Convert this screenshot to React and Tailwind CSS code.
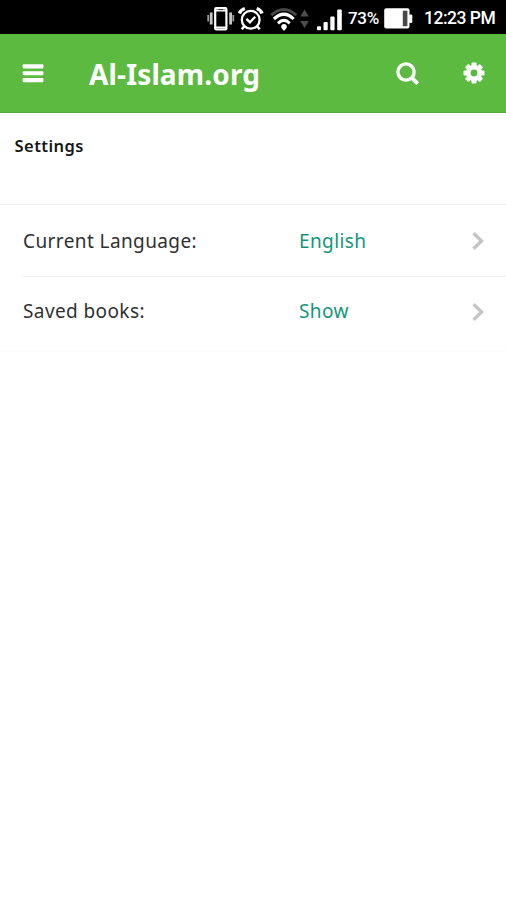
import React from 'react'

const VibrateIcon = () => (
  <svg width="28" height="26" viewBox="0 0 28 26" fill="none" stroke="#fff">
    <path d="M1.200 10v6.500M26.300 10v6.500" strokeWidth="1.800" stroke="#999" />
    <path d="M4.200 7.500v12M23.600 7.500v12" strokeWidth="2.800" stroke="#c4c4c4" />
    <rect x="8.200" y="3.200" width="11.200" height="21.300" rx="1" strokeWidth="2.200" />
    <path d="M8.500 5.500h10.700M8.500 22.600h10.700" strokeWidth="2" />
    <path d="M11.500 4.600h4.500" strokeWidth="1" stroke="#333" />
  </svg>
)

const AlarmIcon = () => (
  <svg width="26" height="26" viewBox="0 0 26 26" fill="none" stroke="#fff">
    <circle cx="12.700" cy="14.800" r="8.900" strokeWidth="2.300" />
    <path d="M1.400 8.500Q2.500 5 6.800 3.500M24 8.500Q23 5 18.700 3.500" strokeWidth="3.400" />
    <path d="M6.500 21l-2.700 3.300M19 21l2.700 3.300" strokeWidth="2.600" />
    <path d="M8.500 13.800l3.400 3.500 5.300-5.600" strokeWidth="2.400" />
  </svg>
)

const WifiIcon = () => (
  <svg width="28" height="26" viewBox="0 0 28 26" fill="none">
    <path d="M1.300 10.200Q14 -1.200 26.300 10.200" stroke="#484848" strokeWidth="2.900" />
    <path d="M3.900 14Q14 4.500 23.700 14" stroke="#fff" strokeWidth="3.100" />
    <path d="M8 18.300Q14 12.600 19.700 18.300" stroke="#fff" strokeWidth="3.100" />
    <path d="M14 18.900a2.900 2.900 0 0 1 2.700 3.800L14 25.900l-2.700-3.200A2.900 2.900 0 0 1 14 18.900z" fill="#fff" />
  </svg>
)

const DataArrowsIcon = () => (
  <svg width="9" height="26" viewBox="0 0 9 26" fill="#4d4d4d">
    <path d="M4.500 4.500l4.300 7H.2zM4.500 23l4.300-7H.2z" />
  </svg>
)

const SignalIcon = () => (
  <svg width="26" height="26" viewBox="0 0 26 26" fill="#fff">
    <rect x="0" y="21.300" width="4" height="4" rx="1" />
    <rect x="6.500" y="17" width="4.200" height="8.300" rx="1" />
    <rect x="13.300" y="11.500" width="4.300" height="13.800" rx="1" />
    <rect x="20.200" y="4.500" width="4.600" height="20.800" rx="1" />
  </svg>
)

const BatteryIcon = () => (
  <svg width="29" height="26" viewBox="0 0 29 26">
    <rect x="0.200" y="3.200" width="25.300" height="20.200" rx="2" fill="#fff" />
    <rect x="25" y="9.500" width="3.300" height="8.500" rx="1.200" fill="#fff" />
    <rect x="18.800" y="5.700" width="4.600" height="15.500" fill="#484848" />
  </svg>
)

const MenuIcon = () => (
  <svg width="22" height="20" viewBox="0 0 22 20" fill="#fff">
    <rect x="0.700" y="1.300" width="20.700" height="4.100" rx="1" />
    <rect x="0.700" y="8.300" width="20.700" height="3.900" rx="1" />
    <rect x="0.700" y="15.100" width="20.700" height="4.100" rx="1" />
  </svg>
)

const SearchIcon = () => (
  <svg width="24" height="24" viewBox="0 0 24 24" fill="none" stroke="#fff">
    <circle cx="10" cy="10" r="8.100" strokeWidth="3.400" />
    <path d="M15.700 15.700l6 6" strokeWidth="4" />
  </svg>
)

// eight rounded teeth around a ring
const GearIcon = () => (
  <svg width="22" height="22" viewBox="-11 -11 22 22" fill="#fff">
    {[0, 45, 90, 135].map((angle) => (
      <rect key={angle} x="-2.500" y="-10.500" width="5" height="21" rx="1" transform={`rotate(${angle})`} />
    ))}
    <circle r="8" />
    <circle r="3.400" fill="#5dba40" />
  </svg>
)

const ChevronIcon = () => (
  <svg width="14" height="20" viewBox="0 0 14 20" fill="none" stroke="#c5c5c5" strokeWidth="3.300">
    <path d="M2.500 2.200L10.600 10l-8.100 7.800" />
  </svg>
)

const settings = [
  { label: 'Current Language:', value: 'English' },
  { label: 'Saved books:', value: 'Show' },
]

const StatusBar = () => (
  <div className="flex h-[34px] items-center bg-black pl-[207px] pt-[2px] font-['Roboto',sans-serif] font-medium text-white">
    <VibrateIcon />
    <div className="ml-[3px]"><AlarmIcon /></div>
    <div className="ml-[6px]"><WifiIcon /></div>
    <div className="ml-[2px]"><DataArrowsIcon /></div>
    <div className="ml-[8px]"><SignalIcon /></div>
    <span className="ml-[5px] w-[36px] whitespace-nowrap pt-px text-[17px] tracking-[-0.300px]">73%</span>
    <BatteryIcon />
    <span className="ml-[11px] whitespace-nowrap pt-px text-[17.500px] tracking-[-0.500px]">12:23 PM</span>
  </div>
)

const Header = () => (
  <header className="flex h-[79px] items-center border-b border-[#55a63b] bg-[#5dba40] pl-[22px] pr-[21px]">
    <button aria-label="Menu"><MenuIcon /></button>
    <h1 className="ml-[45px] flex-1 pt-px text-[28px] font-bold tracking-[0.150px] text-white">Al-Islam.org</h1>
    <button className="pt-px" aria-label="Search"><SearchIcon /></button>
    <button className="ml-[43px]" aria-label="Settings"><GearIcon /></button>
  </header>
)

const App = () => {
  return (
    <div className="h-[900px] overflow-hidden bg-white font-['Noto_Sans',sans-serif]">
      <StatusBar />
      <Header />
      <h2 className="h-[91px] pl-[14.500px] pt-[21px] text-[16.500px] font-semibold tracking-[0.450px] text-[#151515]">Settings</h2>

      <ul className="border-y border-[#f0f0f0] border-b-[#fafafa] pl-[22px] text-[19px] tracking-[0.400px] text-[#303030]">
        {settings.map((item) => (
          <li
            key={item.label}
            className="flex h-[72px] items-center border-b border-[#f2f2f2] pt-px last:h-[74px] last:border-b-0 last:pb-[6px]"
          >
            <span className="w-[277px] pl-px">{item.label}</span>
            <span className="flex-1 text-[#12967a]">{item.value}</span>
            <span className="mr-[21px]"><ChevronIcon /></span>
          </li>
        ))}
      </ul>
    </div>
  )
}

export default App
